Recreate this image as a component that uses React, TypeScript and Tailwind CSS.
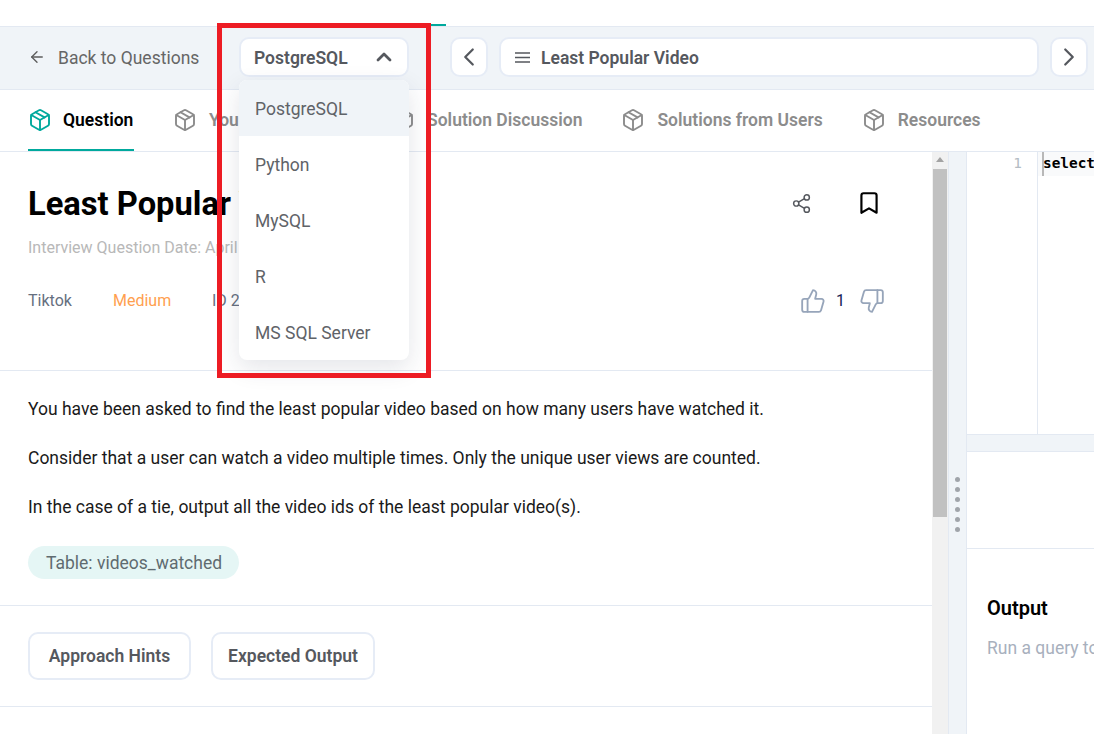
import React from "react";
import { ArrowLeft, Bookmark, ChevronLeft, ChevronRight, ChevronUp, Package, Share2, ThumbsDown, ThumbsUp } from "lucide-react";

function Tab({ label, active, sizeClass }: { label: string; active?: boolean; sizeClass?: string }) {
  return (
    <div className={`flex h-[61px] items-center border-b-2 ${active ? "gap-[11px] border-[#00a99d]" : "gap-[12px] border-transparent"} ${sizeClass ?? ""}`}>
      <Package size={24} strokeWidth={1.9} className={active ? "text-[#00a99d]" : "text-[#8c8c8c]"} />
      <span className={`mt-[2px] text-[17.5px] font-semibold whitespace-nowrap ${active ? "text-black" : "text-[#8c8c8c]"}`}>{label}</span>
    </div>
  );
}

export default function App() {
  return (
    <div className="relative flex h-[734px] w-[1094px] flex-col overflow-hidden bg-white font-['Roboto',sans-serif]">
      <div className="flex h-[26px] shrink-0 items-end">
        <div className="ml-[300px] h-[2px] w-[146px] bg-[#00a99d]" />
      </div>

      <div className="flex h-[64px] shrink-0 items-center border-y border-[#e3e9f2] bg-[#f0f4f8] pb-[2px] pl-[28px]">
        <ArrowLeft size={18} strokeWidth={1.8} className="text-[#5c5c5c]" />
        <span className="ml-[12px] mt-[2px] w-[181px] text-[17.5px] text-[#666]">Back to Questions</span>
        <div className="flex h-[40px] w-[170px] items-center justify-between rounded-[10px] border-2 border-[#e6ecf6] bg-white pl-[13px] pr-[11px]">
          <span className="mt-[2px] text-[17.5px] font-semibold text-[#55585e]">PostgreSQL</span>
          <ChevronUp size={24} strokeWidth={2.8} className="text-[#55585e]" />
        </div>
        <div className="ml-[41px] flex h-[40px] w-[38px] items-center justify-center rounded-[10px] border-2 border-[#e6ecf6] bg-white">
          <ChevronLeft size={30} strokeWidth={1.8} className="text-[#55585e]" />
        </div>
        <div className="ml-[11px] flex h-[40px] w-[540px] items-center rounded-[10px] border-2 border-[#e6ecf6] bg-white pl-[14px]">
          <svg width="15" height="11" viewBox="0 0 15 11" className="text-[#55585e]">
            <path d="M0 1h15M0 5.5h15M0 10h15" stroke="currentColor" strokeWidth="1.4" fill="none" />
          </svg>
          <span className="ml-[11px] mt-[2px] text-[17.5px] font-semibold text-[#55585e]">Least Popular Video</span>
        </div>
        <div className="ml-[11px] flex h-[40px] w-[38px] items-center justify-center rounded-[10px] border-2 border-[#e6ecf6] bg-white">
          <ChevronRight size={30} strokeWidth={1.8} className="text-[#55585e]" />
        </div>
      </div>

      <div className="flex h-[62px] shrink-0 items-start gap-[39px] border-b border-[#e3e9f2] pl-[28px]">
        <Tab label="Question" active sizeClass="w-[106px]" />
        <Tab label="Your Solutions (0)" sizeClass="w-[179px]" />
        <Tab label="Solution Discussion" />
        <Tab label="Solutions from Users" />
        <Tab label="Resources" />
      </div>

      <div className="flex min-h-0 flex-1">
        <div className="w-[932px] shrink-0">
          <div className="h-[219px] border-b border-[#e3e9f2] px-[28px] pt-[30px]">
            <div className="flex items-center justify-between">
              <h1 className="text-[32.7px] leading-[44px] font-bold text-black">Least Popular Video</h1>
              <div className="mb-[2px] mr-[22px] flex items-center gap-[44px]">
                <Share2 size={21} strokeWidth={1.7} className="text-[#55585e]" />
                <Bookmark size={26} strokeWidth={2} className="text-black" />
              </div>
            </div>
            <div className="mt-[10px] text-[16px] leading-[24px] text-[#b8b8b8]">Interview Question Date: April 2022</div>
            <div className="mt-[28px] flex items-center justify-between">
              <div className="flex items-center text-[16px] leading-[24px]">
                <span className="w-[85px] text-[#66707f]">Tiktok</span>
                <span className="w-[99px] text-[#ff9f50]">Medium</span>
                <span className="text-[#66707f]">ID 2123</span>
              </div>
              <div className="mr-[19px] flex items-center">
                <ThumbsUp size={26} strokeWidth={1.7} className="text-[#97a5ba]" />
                <span className="ml-[10px] mr-[15px] w-[8px] text-[16px] text-[#162456]">1</span>
                <ThumbsDown size={26} strokeWidth={1.7} className="text-[#97a5ba]" />
              </div>
            </div>
          </div>

          <div className="h-[235px] border-b border-[#e3e9f2] px-[28px] pt-[24px]">
            <div className="flex flex-col gap-[21px] text-[17.5px] leading-[28px] text-[#1a1a1a]">
              <p>You have been asked to find the least popular video based on how many users have watched it.</p>
              <p>Consider that a user can watch a video multiple times. Only the unique user views are counted.</p>
              <p>In the case of a tie, output all the video ids of the least popular video(s).</p>
            </div>
            <span className="mt-[25px] inline-flex h-[33px] items-center rounded-full bg-[#e5f6f5] pl-[18px] pr-[17px] pt-[2px] text-[17.5px] text-[#5f6b70]">Table: videos_watched</span>
          </div>

          <div className="flex h-[101px] items-center gap-[20px] border-b border-[#e3e9f2] px-[28px]">
            <div className="flex h-[48px] w-[163px] items-center justify-center rounded-[10px] border-2 border-[#e6ecf6] text-[17.5px] font-semibold text-[#55585e]">Approach Hints</div>
            <div className="flex h-[48px] w-[164px] items-center justify-center rounded-[10px] border-2 border-[#e6ecf6] text-[17.5px] font-semibold text-[#55585e]">Expected Output</div>
          </div>
        </div>

        <div className="flex w-[16px] shrink-0 flex-col items-center bg-[#f1f1f1]">
          <div className="mt-[5px] h-0 w-0 border-x-[4px] border-b-[5px] border-x-transparent border-b-[#a3a3a3]" />
          <div className="mt-[7px] h-[348px] w-[14px] bg-[#c1c1c1]" />
        </div>

        <div className="flex w-[19px] shrink-0 flex-col items-center gap-[5px] border-x border-[#e3e9f2] bg-[#f0f4f8] pt-[325px]">
          {[0, 1, 2, 3, 4, 5].map((i) => (
            <span key={i} className="h-[5px] w-[5px] rounded-full bg-[#a0a4aa]" />
          ))}
        </div>

        <div className="min-w-0 flex-1">
          <div className="flex h-[282px]">
            <div className="w-[71px] shrink-0 border-r border-[#e3e9f2] pr-[15px] pt-[1px] text-right font-['DejaVu_Sans_Mono',monospace] text-[14.4px] leading-[20px] text-[#b4bcc4]">1</div>
            <div className="h-[24px] flex-1 bg-[#f9fafb] pl-[4px]">
              <div className="h-[24px] overflow-hidden border-l-2 border-[#b8b8b8] pt-[1px] font-['DejaVu_Sans_Mono',monospace] text-[14.4px] leading-[20px] font-bold whitespace-nowrap text-black [text-indent:-1px]">select</div>
            </div>
          </div>
          <div className="h-[18px] border-y border-[#e3e9f2] bg-[#f0f4f8]" />
          <div className="h-[97px] border-b border-[#e3e9f2]" />
          <div className="whitespace-nowrap pl-[20px] pt-[45px]">
            <div className="text-[20px] leading-[28px] font-semibold text-black">Output</div>
            <div className="mt-[13px] text-[17.5px] leading-[26px] text-[#a8b0bd]">Run a query to see results</div>
          </div>
        </div>
      </div>

      <div className="absolute left-[239px] top-[80px] w-[170px] overflow-hidden rounded-lg bg-white text-[17.5px] text-[#5f6368] shadow-[0_8px_24px_rgba(30,40,70,0.12)]">
        <div className="flex h-[56px] items-center bg-[#f0f4f8] pl-[16px] pt-[2px]">PostgreSQL</div>
        <div className="flex h-[56px] items-center pl-[16px] pt-[2px]">Python</div>
        <div className="flex h-[56px] items-center pl-[16px] pt-[2px]">MySQL</div>
        <div className="flex h-[56px] items-center pl-[16px] pt-[2px]">R</div>
        <div className="flex h-[56px] items-center pl-[16px] pt-[2px]">MS SQL Server</div>
      </div>

      <div className="absolute left-[217px] top-[23px] h-[355px] w-[214px] border-[5px] border-[#ed1c24]" />
    </div>
  );
}
